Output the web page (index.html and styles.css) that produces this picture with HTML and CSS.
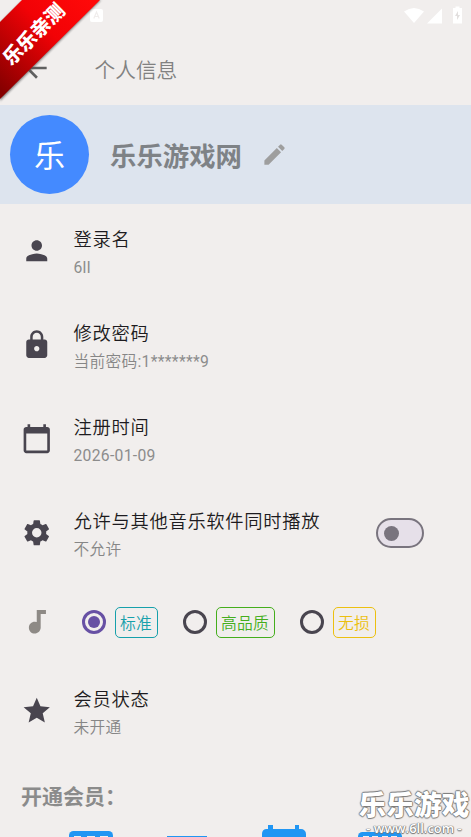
FILE: index.html
```html
<!DOCTYPE html>
<html lang="zh-CN">
<head>
<meta charset="utf-8">
<title>个人信息</title>
<link rel="stylesheet" href="styles.css">
</head>
<body>
<div class="screen">
  <header class="appbar">
    <div class="status">
      <svg class="ime" width="13" height="13" viewBox="0 0 13 13"><rect width="13" height="13" rx="2" fill="#fff"/><path d="M3.800 9.500 6.500 3l2.700 6.500M4.800 7.500h3.400" fill="none" stroke="#f0edec" stroke-width="1.200"/></svg>
      <svg class="system" width="60" height="20" viewBox="0 0 60 20"><path d="M0 5.500Q10 -1.500 20 5.500L10 17Z" fill="#fff"/><path d="M38 2.500V17.500H23Z" fill="#fff"/><path d="M49 2h2.500V.5h4V2H58v15.500h-9Z" fill="#fff"/><path d="m54 5-3 5h2v4l3-5h-2Z" fill="#e2dfde"/></svg>
    </div>
    <div class="titlebar">
      <svg class="back" width="32" height="32" viewBox="0 0 24 24"><path d="M20 11H7.830l5.590-5.590L12 4l-8 8 8 8 1.410-1.410L7.830 13H20z"/></svg>
      <h1>个人信息</h1>
    </div>
  </header>
  <section class="profile">
    <div class="avatar">乐</div>
    <h2>乐乐游戏网</h2>
    <svg class="edit" width="27" height="27" viewBox="0 0 24 24"><path d="M3 17.250V21h3.750L17.810 9.940l-3.750-3.750L3 17.250zM20.710 7.040a1 1 0 0 0 0-1.410l-2.340-2.340a1 1 0 0 0-1.410 0l-1.830 1.830 3.750 3.750 1.830-1.830z"/></svg>
  </section>
  <main>
    <div class="row">
      <svg class="icon" viewBox="0 0 24 24"><path d="M12 12c2.210 0 4-1.790 4-4s-1.790-4-4-4-4 1.790-4 4 1.790 4 4 4zm0 2c-2.670 0-8 1.340-8 4v2h16v-2c0-2.660-5.330-4-8-4z"/></svg>
      <div class="text"><div class="label">登录名</div><div class="value"><span class="latin">6ll</span></div></div>
    </div>
    <div class="row">
      <svg class="icon" viewBox="0 0 24 24"><path d="M18 8h-1V6c0-2.760-2.240-5-5-5S7 3.240 7 6v2H6c-1.100 0-2 .9-2 2v10c0 1.100.9 2 2 2h12c1.100 0 2-.9 2-2V10c0-1.100-.9-2-2-2zm-6 9c-1.100 0-2-.9-2-2s.9-2 2-2 2 .9 2 2-.9 2-2 2zm3.100-9H8.900V6c0-1.710 1.390-3.100 3.100-3.100s3.100 1.390 3.100 3.100v2z"/></svg>
      <div class="text"><div class="label">修改密码</div><div class="value">当前密码<span class="latin">:1*******9</span></div></div>
    </div>
    <div class="row">
      <svg class="icon" viewBox="0 0 24 24"><path d="M20 3h-1V1h-2v2H7V1H5v2H4c-1.100 0-2 .9-2 2v16c0 1.100.9 2 2 2h16c1.100 0 2-.9 2-2V5c0-1.100-.9-2-2-2zm0 18H4V8h16v13z"/></svg>
      <div class="text"><div class="label">注册时间</div><div class="value"><span class="latin">2026-01-09</span></div></div>
    </div>
    <div class="row">
      <svg class="icon" viewBox="0 0 24 24"><path d="M19.140 12.940c.04-.3.06-.61.06-.94 0-.32-.02-.64-.07-.94l2.030-1.580a.49.49 0 0 0 .12-.61l-1.920-3.320a.488.488 0 0 0-.59-.22l-2.390.96c-.5-.38-1.030-.7-1.620-.94l-.36-2.540a.484.484 0 0 0-.48-.41h-3.840c-.24 0-.43.17-.47.41l-.36 2.540c-.59.24-1.130.57-1.620.94l-2.390-.96c-.22-.08-.47 0-.59.22L2.740 8.870c-.12.21-.08.47.12.61l2.030 1.580c-.05.3-.09.63-.09.94s.02.64.07.94l-2.030 1.580a.49.49 0 0 0-.12.61l1.920 3.320c.12.22.37.29.59.22l2.390-.96c.5.38 1.030.7 1.620.94l.36 2.540c.05.24.24.41.48.41h3.840c.24 0 .44-.17.47-.41l.36-2.540c.59-.24 1.130-.56 1.620-.94l2.390.96c.22.08.47 0 .59-.22l1.920-3.320c.12-.22.07-.47-.12-.61l-2.010-1.580zM12 15.600A3.600 3.600 0 1 1 12 8.400a3.600 3.600 0 0 1 0 7.200z"/></svg>
      <div class="text"><div class="label">允许与其他音乐软件同时播放</div><div class="value">不允许</div></div>
      <div class="switch"><span class="thumb"></span></div>
    </div>
    <div class="row quality">
      <svg class="icon note" viewBox="0 0 24 24"><path d="M12 3v9.280a4.390 4.390 0 0 0-1.500-.28C8.010 12 6 14.010 6 16.500S8.010 21 10.500 21c2.310 0 4.200-1.750 4.450-4H15V6h4V3h-7z"/></svg>
      <div class="options">
        <div class="option"><span class="radio on"></span><span class="tag teal">标准</span></div>
        <div class="option"><span class="radio"></span><span class="tag green">高品质</span></div>
        <div class="option"><span class="radio"></span><span class="tag gold">无损</span></div>
      </div>
    </div>
    <div class="row">
      <svg class="icon" viewBox="0 0 24 24"><path d="M12 17.270 18.180 21l-1.640-7.030L22 9.240l-7.190-.61L12 2 9.190 8.630 2 9.240l5.460 4.730L5.820 21z"/></svg>
      <div class="text"><div class="label">会员状态</div><div class="value">未开通</div></div>
    </div>
    <h3>开通会员：</h3>
    <div class="plans">
      <svg width="44" height="30" viewBox="0 0 44 30"><rect width="44" height="30" rx="4.500" fill="#2196f3"/><path d="M5 5h7v7H5zM18 5h8v7h-8zM31 5h8v7h-8z" fill="#f1eeed"/></svg>
      <svg width="40" height="25" viewBox="0 0 40 25"><path d="M0 0h40v25H0z" fill="#2196f3"/></svg>
      <svg width="44" height="34" viewBox="0 0 44 34"><path d="M4 4h2V0h5v4h22V0h4v4h2a5 5 0 0 1 5 5v25H0V9a5 5 0 0 1 4-5Z" fill="#2196f3"/></svg>
      <svg width="44" height="30" viewBox="0 0 44 30"><rect width="44" height="30" rx="4.500" fill="#2196f3"/><path d="M5 4h6v5H5zM14 4h6v5h-6zM24 4h6v5h-6zM33 4h6v5h-6z" fill="#f1eeed"/></svg>
    </div>
  </main>
  <div class="ribbon">
    <svg width="106" height="106" viewBox="0 0 106 106">
      <defs>
        <linearGradient id="red" gradientUnits="userSpaceOnUse" x1="90" y1="0" x2="0" y2="90"><stop offset="0" stop-color="#ff0909"/><stop offset=".4" stop-color="#f20206"/><stop offset="1" stop-color="#850000"/></linearGradient>
        <filter id="soft" x="-10%" y="-10%" width="120%" height="120%"><feGaussianBlur stdDeviation="1.200"/></filter>
      </defs>
      <path d="M23 0H101L0 101V23Z" fill="#555" opacity=".75" filter="url(#soft)"/>
      <path d="M22 0H100L0 99V22Z" fill="url(#red)"/>
      <text class="ribbon-text" transform="translate(33.500 34) rotate(-45)" text-anchor="middle" y="7.300">乐乐亲测</text>
    </svg>
  </div>
  <div class="watermark">
    <div class="brand">乐乐游戏</div>
    <div class="site">- www.6ll.com -</div>
  </div>
</div>
</body>
</html>
```
FILE: styles.css
```css
* { box-sizing: border-box; }
body { margin: 0; overflow: hidden; }
.screen {
  position: relative;
  height: 837px;
  overflow: hidden;
  background: #f1eeed;
  font-family: Roboto, "Noto Sans CJK SC", sans-serif;
}
h1, h2, h3 { margin: 0; }
svg { display: block; flex: none; }
.appbar { height: 105px; }
.status {
  height: 32px;
  padding: 6px 7px 0 90px;
  display: flex;
  justify-content: space-between;
}
.ime { margin-top: 3px; }
.titlebar {
  height: 73px;
  padding-left: 20px;
  display: flex;
  align-items: center;
}
.back { fill: #606060; margin-top: -1px; }
h1 {
  margin-left: 42.500px;
  padding-top: 4px;
  font-size: 20.700px;
  line-height: 30px;
  font-weight: 350;
  color: #818181;
}
.profile {
  height: 99px;
  padding-left: 10px;
  display: flex;
  align-items: center;
  background: #dde4ee;
}
.avatar {
  width: 79px;
  height: 79px;
  border-radius: 50%;
  background: #448aff;
  color: #fff;
  font-size: 31px;
  line-height: 84px;
  text-align: center;
}
h2 {
  margin-left: 21px;
  padding-top: 5px;
  font-size: 26.400px;
  line-height: 38px;
  font-weight: 700;
  color: #7e8286;
}
.edit { margin-left: 19px; fill: #9e9e9e; }
.row {
  height: 94px;
  padding: 0 47px 0 20.500px;
  display: flex;
  align-items: center;
}
.icon { width: 31.500px; height: 31.500px; fill: #49454f; }
.note { fill: #8e8a86; }
.text { flex: 1; margin-left: 21.500px; padding-top: 5px; }
.label {
  font-size: 18.300px;
  line-height: 28px;
  font-weight: 350;
  letter-spacing: .7px;
  color: #1d1b20;
}
.value {
  font-size: 15.700px;
  line-height: 28px;
  font-weight: 350;
  letter-spacing: .3px;
  color: #868686;
}
.latin { font-weight: 400; color: #8c8c8c; }
.switch {
  width: 48px;
  height: 30px;
  padding-left: 6px;
  border: 2px solid #79747e;
  border-radius: 15px;
  background: #e6e0e9;
  display: flex;
  align-items: center;
}
.thumb { width: 15px; height: 15px; border-radius: 50%; background: #79747e; }
.quality { height: 84px; }
.options { margin-left: 29.500px; display: flex; gap: 25px; }
.option { display: flex; align-items: center; gap: 9px; }
.radio {
  width: 24px;
  height: 24px;
  border: 3px solid #49454f;
  border-radius: 50%;
  display: grid;
  place-items: center;
}
.on { border-color: #6750a4; }
.on::after {
  content: "";
  width: 12px;
  height: 12px;
  border-radius: 50%;
  background: #6750a4;
}
.tag {
  height: 31px;
  padding: 0 4.500px;
  border: 1px solid;
  border-radius: 5px;
  font-size: 15.800px;
  font-weight: 350;
  letter-spacing: .2px;
  line-height: 32px;
}
.teal { color: #16a0ab; }
.green { color: #45ae1c; }
.gold { color: #ecc010; }
h3 {
  height: 73px;
  padding: 24px 0 0 21px;
  font-size: 21px;
  line-height: 31px;
  font-weight: 700;
  color: #8b8b8b;
}
.plans {
  height: 6px;
  padding: 0 69px;
  display: flex;
  justify-content: space-between;
  align-items: flex-start;
}
.plans svg:nth-child(2) { margin-top: 5px; }
.plans svg:nth-child(3) { margin: -6px -2px 0 2px; }
.plans svg:nth-child(4) { margin-top: 1px; }
.ribbon { position: absolute; left: 0; top: 0; }
.ribbon-text {
  fill: #fff;
  font-size: 19.400px;
  font-weight: 900;
}
.watermark {
  position: absolute;
  right: 1px;
  top: 788px;
  width: 112px;
  color: #fff;
  text-align: center;
  white-space: nowrap;
}
.brand {
  font-size: 27.800px;
  line-height: 35px;
  font-weight: 900;
  text-shadow: .7px 0 1px #777, -.7px 0 1px #777, 0 .7px 1px #777, 0 -.7px 1px #777;
}
.site {
  font-family: "Open Sans", sans-serif;
  font-size: 13px;
  line-height: 10px;
  font-weight: 600;
  text-shadow: .5px 0 1px #777, -.5px 0 1px #777, 0 .5px 1px #777, 0 -.5px 1px #777;
}
```
